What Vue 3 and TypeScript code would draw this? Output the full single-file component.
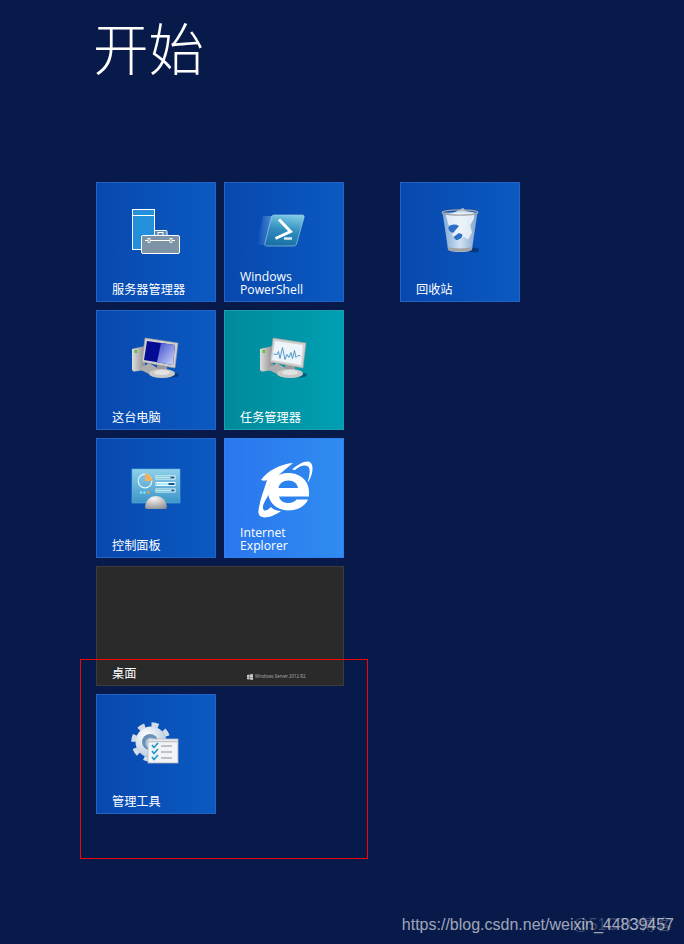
<template>
  <main class="screen">
    <h1 class="title">开始</h1>
    <div class="groups">
      <section v-for="(group, g) in groups" :key="g" :class="['group', { 'group-single': group.length === 1 }]">
        <div v-for="t in group" :key="t.id" :class="['tile', `tile-${t.kind}`]">
          <svg v-if="t.id === 'server'" class="icon" viewBox="0 0 60 60">
            <rect x="6.500" y="3.500" width="22" height="40" fill="#2490dc" stroke="#fff" />
            <path d="M6.500 9.500h22" stroke="#fff" />
            <path d="M28.500 24.500h11.500a1 1 0 0 1 1 1v5H28.500z" fill="#5f8bb0" stroke="#fff" />
            <rect x="32" y="26.500" width="5" height="3" fill="none" stroke="#fff" />
            <rect x="15.500" y="29.500" width="38" height="18" rx="1.500" fill="#7e93a5" stroke="#fff" />
            <path d="M19 34.500h30" stroke="#fff" />
            <rect x="22" y="32.500" width="2" height="4" fill="#7e93a5" stroke="#fff" stroke-width=".8" />
            <rect x="44" y="32.500" width="2" height="4" fill="#7e93a5" stroke="#fff" stroke-width=".8" />
          </svg>

          <svg v-else-if="t.id === 'powershell'" class="icon icon-soft" viewBox="0 0 60 60">
            <defs>
              <linearGradient id="psFill" x1=".6" y1="0" x2=".4" y2="1">
                <stop offset="0" stop-color="#7cc8e4" />
                <stop offset=".5" stop-color="#2f8dbd" />
                <stop offset="1" stop-color="#1a6ea6" />
              </linearGradient>
              <linearGradient id="psTrail" x1="0" y1="0" x2="1" y2="0">
                <stop offset="0" stop-color="#8fc4f0" stop-opacity="0" />
                <stop offset="1" stop-color="#8fc4f0" stop-opacity=".55" />
              </linearGradient>
            </defs>
            <path d="M9 10h11L11 39H3z" fill="url(#psTrail)" />
            <path d="M20 9h28.500c1.300 0 2 1 1.600 2.200L42.500 38c-.4 1.200-1.300 2-2.500 2H12.500c-1.300 0-2-1-1.600-2.200L17.500 11c.4-1.200 1.300-2 2.500-2z" fill="url(#psFill)" stroke="#a8d6ec" stroke-width=".6" />
            <path d="M25 13.500L36.500 25.500 21.500 32.500" fill="none" stroke="#fff" stroke-width="3" />
            <path d="M30 32.500h8" stroke="#d8eef8" stroke-width="2.500" />
          </svg>

          <svg v-else-if="t.id === 'pc' || t.id === 'task'" class="icon icon-soft" viewBox="0 0 60 60">
            <defs>
              <linearGradient :id="`tower-${t.id}`" x1="0" y1="0" x2="1" y2="0">
                <stop offset="0" stop-color="#dedede" />
                <stop offset="1" stop-color="#8e8e8e" />
              </linearGradient>
              <linearGradient :id="`glass-${t.id}`" x1="0" y1="0" x2="1" y2="1">
                <stop offset="0" stop-color="#3a4ad0" />
                <stop offset="1" stop-color="#d4daf8" />
              </linearGradient>
            </defs>
            <ellipse cx="46" cy="41" rx="7" ry="2.500" fill="#04204f" opacity=".5" />
            <path d="M6 15l13-3v24l-10 1.500c-1.500 0-3-.8-3-2.300z" :fill="`url(#tower-${t.id})`" />
            <rect x="8.500" y="16" width="2.500" height="3" fill="#62c030" />
            <path d="M13 35l10-6 10 6-10 5z" fill="#adadad" />
            <rect x="31" y="30" width="10" height="7" fill="#9a9a9a" />
            <ellipse cx="36" cy="39.500" rx="13" ry="4.500" fill="#c8c8c8" />
            <ellipse cx="36" cy="38.500" rx="8" ry="2.500" fill="#e2e2e2" />
            <path d="M19 4l33 5-3 25-33-6z" fill="#cfcfcf" stroke="#9a9a9a" stroke-width=".6" />
            <path d="M21 7l28 4-2 20-29-5z" :fill="t.id === 'pc' ? '#040c94' : '#eef5fa'" />
            <path v-if="t.id === 'pc'" d="M35 9l14 2-2 20-16-2.700z" :fill="`url(#glass-${t.id})`" />
            <path v-else d="M19.500 20l3.500.5 1.500-3 1.500 7 2.500-11 2.500 12 2-5 2 3 2-5 1.500 6 2-8 1.500 7 2-2 2.500.4" fill="none" stroke="#3d8ec4" stroke-width=".9" />
          </svg>

          <svg v-else-if="t.id === 'panel'" class="icon icon-soft" viewBox="0 0 60 60">
            <defs>
              <linearGradient id="panelFill" x1="0" y1="0" x2="0" y2="1">
                <stop offset="0" stop-color="#8fd0ec" />
                <stop offset="1" stop-color="#3d95c8" />
              </linearGradient>
              <radialGradient id="panelBase" cx=".4" cy=".2" r=".9">
                <stop offset="0" stop-color="#f6f6f6" />
                <stop offset="1" stop-color="#8c8c8c" />
              </radialGradient>
            </defs>
            <rect x="6" y="7" width="48" height="34" fill="url(#panelFill)" stroke="#62b0d8" stroke-width=".6" />
            <circle cx="19" cy="19" r="6.800" fill="none" stroke="#e6f4fb" stroke-width="1.200" />
            <path d="M19 11.500a7.500 7.500 0 0 1 7.500 7.500h-7.500z" fill="#f0b060" />
            <g fill="#12588c" stroke="#eef8fc" stroke-width="1">
              <rect x="30" y="14" width="19" height="3" />
              <rect x="30" y="20.500" width="19" height="3" />
              <rect x="30" y="27" width="19" height="3" />
            </g>
            <g fill="#a8f0f6">
              <rect x="30.500" y="14.500" width="14" height="2" />
              <rect x="30.500" y="21" width="12" height="2" />
              <rect x="30.500" y="27.500" width="15" height="2" />
            </g>
            <circle cx="15" cy="30.500" r="1.300" fill="#7fe8f4" />
            <circle cx="18.500" cy="30.500" r="1.300" fill="#7fe8f4" />
            <circle cx="22.500" cy="30.500" r="1.300" fill="#f0a040" />
            <path d="M19 45c1-7 5-11 11-11s10 4 11 11c.2 1-1 2-2 2H21c-1 0-2-1-2-2z" fill="url(#panelBase)" />
          </svg>

          <svg v-else-if="t.id === 'ie'" class="icon icon-ie" viewBox="0 0 66 66">
            <path fill="#fff" fill-rule="evenodd" d="M58 41.500H28C29 46 33 48 37.500 48 41 48 44 46.500 45.500 44.500H57C54 51 47 55.500 37.500 55.500 25.500 55.500 17 47 17 36.500 17 26 25.500 18 37.500 18 49.500 18 58 26.500 58 36.500zM27.500 33H47C46.500 28.500 42.500 25.500 37.500 25.500S28 28.500 27.500 33z" />
            <path fill="#fff" d="M42 8C30 9 17 15 10 25 12 26 14 26 16 25 14 32 10 42 8.500 50 7 56 7 59 9 61 13 64 22 62 30 56 25 56 22 54 20 52 16 56 12.500 57 12 53 11.500 50 14 46 17.500 40L18 30 30 18z" />
            <path fill="#fff" d="M41 14.500C48 8.500 56 4.500 59.500 7.500 63 11 62 20 56.500 28 58.500 20 60 14 57 11.500 54 9 48 11 44 15z" />
          </svg>

          <svg v-else-if="t.id === 'tools'" class="icon icon-gear" viewBox="0 0 60 60">
            <defs>
              <radialGradient id="gearFill" cx=".35" cy=".3" r=".9">
                <stop offset="0" stop-color="#ffffff" />
                <stop offset="1" stop-color="#a4bcd6" />
              </radialGradient>
            </defs>
            <circle cx="25" cy="24" r="17.500" fill="none" stroke="#d2dde9" stroke-width="4.500" stroke-dasharray="7 6.740" />
            <circle cx="25" cy="24" r="15.500" fill="url(#gearFill)" />
            <circle cx="24" cy="24" r="8" fill="#6b90b8" />
            <circle cx="25" cy="25" r="5.500" fill="#b4c8de" />
            <rect x="22" y="21" width="30" height="24" fill="#f2f3f6" stroke="#b0b4c0" stroke-width=".8" />
            <path d="M22.500 23.500h29" stroke="#c0c4cc" stroke-width="1.500" />
            <path d="M26 27l2 2.500 4-4.500M26 33l2 2.500 4-4.500M26 39l2 2.500 4-4.500" fill="none" stroke="#1e9ac4" stroke-width="1.700" />
            <path d="M35 28h11M35 34h11M35 40h11" stroke="#8d8da6" stroke-width="1.200" />
          </svg>

          <svg v-else-if="t.id === 'bin'" class="icon icon-soft" viewBox="0 0 60 60">
            <defs>
              <linearGradient id="binFill" x1="0" y1="0" x2="1" y2="0">
                <stop offset="0" stop-color="#7fa8d4" />
                <stop offset=".5" stop-color="#cfe2f2" />
                <stop offset="1" stop-color="#7fa2cc" />
              </linearGradient>
            </defs>
            <ellipse cx="44" cy="44" rx="5" ry="2.500" fill="#04204f" opacity=".5" />
            <path d="M12.500 6.500L18 43c.3 2 5 3 12 3s11.700-1 12-3L47.500 6.500z" fill="url(#binFill)" />
            <path d="M17.500 40.500c2 2.500 23 2.500 25 0L42 43.500c-.5 3-23.500 3-24 0z" fill="#a2a2a2" />
            <path d="M16 9l9-3 8-4 3 3 8 1.500v6l-4 7 2 7-4 7-4-3-5 4-6-4-2-8-3-5z" fill="#f2f7fb" opacity=".82" />
            <path d="M18.500 21c3-3 7-3 10.500-1l-3 3.500-3 3.500c-3-1-5-3-4.500-6zM29 27l3.500 1.500c0 3-2.500 5.500-6.500 5.500l-2.500-3z" fill="#2c6fc8" />
            <ellipse cx="30" cy="6.500" rx="17.800" ry="2.600" fill="none" stroke="#a4a4a4" stroke-width="1.300" />
          </svg>

          <span v-if="t.kind === 'desktop'" class="server-mark">
            <svg class="win-logo" viewBox="0 0 10 10">
              <path d="M0 1.500l4.400-.6v3.900H0zM5 .8L10 0v4.800H5zM0 5.300h4.400v3.900L0 8.600zM5 5.300h5V10l-5-.7z" fill="#c8c8c8" />
            </svg>
            Windows Server 2012 R2
          </span>

          <span class="label">
            <template v-for="(line, i) in t.label" :key="i">{{ line }}<br v-if="i < t.label.length - 1" /></template>
          </span>
        </div>
      </section>
    </div>

    <div class="selection"></div>
    <div class="watermark">https://blog.csdn.net/weixin_44839457</div>
    <div class="watermark watermark-faint">@51CTO博客</div>
  </main>
</template>

<script setup lang="ts">
interface Tile {
  id: string
  kind: 'blue' | 'teal' | 'ie' | 'desktop'
  label: string[]
}

const groups: Tile[][] = [
  [
    { id: 'server', kind: 'blue', label: ['服务器管理器'] },
    { id: 'powershell', kind: 'blue', label: ['Windows', 'PowerShell'] },
    { id: 'pc', kind: 'blue', label: ['这台电脑'] },
    { id: 'task', kind: 'teal', label: ['任务管理器'] },
    { id: 'panel', kind: 'blue', label: ['控制面板'] },
    { id: 'ie', kind: 'ie', label: ['Internet', 'Explorer'] },
    { id: 'desktop', kind: 'desktop', label: ['桌面'] },
    { id: 'tools', kind: 'blue', label: ['管理工具'] }
  ],
  [{ id: 'bin', kind: 'blue', label: ['回收站'] }]
]
</script>

<style>
html,
body {
  margin: 0;
  background: #081a49;
}
</style>

<style scoped>
.screen {
  position: relative;
  width: 684px;
  height: 944px;
  overflow: hidden;
  box-sizing: border-box;
  padding: 0 0 0 96px;
  background: #081a49;
  color: #fff;
  font-family: "Open Sans", "Noto Sans CJK SC", sans-serif;
}

.title {
  margin: 0 0 0 -3px;
  height: 182px;
  box-sizing: border-box;
  padding-top: 7px;
  font-family: "Noto Sans CJK SC", sans-serif;
  font-size: 55.5px;
  font-weight: 300;
  line-height: 78px;
}

.groups {
  display: flex;
  gap: 56px;
  align-items: flex-start;
}

.group {
  display: grid;
  grid-template-columns: repeat(2, 120px);
  grid-auto-rows: 120px;
  gap: 8px;
}

.group-single {
  grid-template-columns: 120px;
}

.tile {
  box-sizing: border-box;
  display: flex;
  flex-direction: column;
  align-items: center;
  position: relative;
  border: 1px solid;
  padding: 0 15px 5px;
}

.tile-blue {
  background: linear-gradient(90deg, #0848ae, #0a5ac2);
  border-color: #2263c4;
}

.tile-teal {
  background: linear-gradient(90deg, #008a9b, #00a0b2);
  border-color: #1b9fae;
}

.tile-ie {
  background: linear-gradient(90deg, #2a76ee, #2f8cf0);
  border-color: #2f80ef;
}

.tile-desktop {
  grid-column: span 2;
  background: #2a2a2a;
  border-color: #3c3c3c;
}

.icon {
  width: 60px;
  height: 60px;
  margin-top: 23px;
  flex-shrink: 0;
}

.icon-soft {
  filter: blur(0.3px);
}

.icon-gear {
  filter: blur(0.5px);
}

.icon-ie {
  width: 66px;
  height: 66px;
  margin-top: 16px;
}

.label {
  margin-top: auto;
  align-self: flex-start;
  font-size: 12.2px;
  line-height: 13px;
  white-space: nowrap;
}

.server-mark {
  position: absolute;
  left: 150px;
  bottom: 5px;
  display: flex;
  align-items: center;
  gap: 2px;
  font-size: 4.4px;
  line-height: 7px;
  color: #b0b0b0;
  white-space: nowrap;
}

.win-logo {
  width: 6px;
  height: 6px;
}

.selection {
  position: absolute;
  left: 80px;
  top: 659px;
  width: 288px;
  height: 200px;
  box-sizing: border-box;
  border: 1px solid #f00808;
}

.watermark {
  position: absolute;
  right: 10px;
  top: 915px;
  font-family: "Liberation Sans", sans-serif;
  font-size: 16px;
  line-height: 20px;
  color: rgba(255, 255, 255, 0.62);
}

.watermark-faint {
  right: 12px;
  font-family: "Liberation Sans", "Noto Sans CJK SC", sans-serif;
  color: rgba(255, 255, 255, 0.22);
}
</style>
